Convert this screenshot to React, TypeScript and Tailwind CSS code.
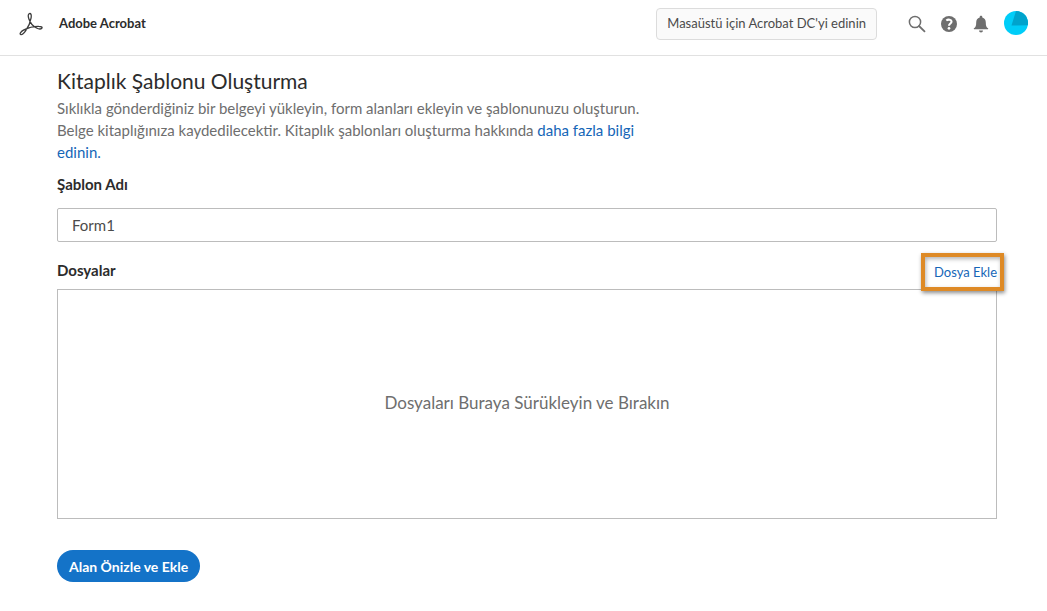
import React, { useState } from 'react'

function AcrobatLogo() {
  return (
    <svg viewBox="0 0 24 24" className="h-6 w-6" fill="none" stroke="#3c3c3c" aria-hidden="true">
      <path
        d="M10.400 1.600c1.700-.5 2.100 1.600 1.700 4.200-.6 4-2.900 9.300-5.500 13-1.700 2.400-3.800 4.100-5 3.600-1.300-.6.200-2.900 3.300-4.500 4.500-2.300 10.700-3.600 14.900-3.500 2.400 0 3.600.7 3.200 1.700-.5 1.300-3.200 1.100-5.500-.1-3.600-1.900-6.400-5.300-7.600-9-.8-2.400-.9-4.900.5-5.400z"
        strokeWidth="1.300"
      />
    </svg>
  )
}

function SearchIcon() {
  return (
    <svg viewBox="0 0 18 18" className="h-[18px] w-[18px]" fill="none" stroke="#6e6e6e" aria-hidden="true">
      <circle cx="7" cy="7" r="5.600" strokeWidth="1.500" />
      <path d="M11 11l5.500 5.300" strokeWidth="1.800" strokeLinecap="round" />
    </svg>
  )
}

function HelpIcon() {
  return (
    <svg viewBox="0 0 18 18" className="h-[18px] w-[18px]" aria-hidden="true">
      <circle cx="9" cy="9" r="8" fill="#6e6e6e" />
      <path d="M6.300 5.500c1.800-1.500 5.200-1.100 5.200 1.200 0 1.700-2.500 1.900-2.500 4" fill="none" stroke="#fff" strokeWidth="2.100" />
      <circle cx="9" cy="13.300" r="1.350" fill="#fff" />
    </svg>
  )
}

function BellIcon() {
  return (
    <svg viewBox="0 0 18 18" className="h-[18px] w-[18px]" fill="#6e6e6e" aria-hidden="true">
      <path d="M9 .8c.8 0 1.300.5 1.300 1.200v.6c2.300.6 3.500 2.500 3.500 5 0 3.500.6 4.700 2.200 5.700.4.300.3.900-.2.900H2.200c-.5 0-.6-.6-.2-.9 1.600-1 2.200-2.200 2.200-5.700 0-2.500 1.200-4.400 3.500-5V2c0-.7.500-1.200 1.300-1.200z" />
      <path d="M7 15.500h4a2 2 0 0 1-4 0z" />
    </svg>
  )
}

function Avatar() {
  return (
    <svg viewBox="0 0 24 24" className="h-6 w-6" aria-hidden="true">
      <circle cx="12" cy="12" r="12" fill="#00cdf8" />
      <path d="M12 0a12 12 0 0 1 11.800 14.200L7.500 14.500 12 0z" fill="#00a3cc" />
    </svg>
  )
}

export default function App() {
  const [name, setName] = useState('Form1')

  return (
    <div className="min-h-screen bg-white font-['Lato','Noto_Sans',sans-serif] text-[#2c2c2c]">
      <header className="flex h-14 items-center border-b border-[#e1e1e1] pb-[7px] pl-[19px] pr-[19px]">
        <AcrobatLogo />
        <span className="ml-4 text-[13px] font-bold">Adobe Acrobat</span>
        <button
          type="button"
          className="ml-auto h-8 whitespace-nowrap rounded border border-[#dcdcdc] bg-[#fafafa] px-[10px] text-[13px] text-[#4b4b4b]"
        >
          Masaüstü için Acrobat DC'yi edinin
        </button>
        <div className="ml-[31px] flex items-center gap-[14px]">
          <button type="button" aria-label="Ara"><SearchIcon /></button>
          <button type="button" aria-label="Yardım"><HelpIcon /></button>
          <button type="button" aria-label="Bildirimler"><BellIcon /></button>
          <button type="button" aria-label="Profil" className="-mt-[2px]"><Avatar /></button>
        </div>
      </header>

      <main className="pl-[57px] pr-[50px] pt-[11px]">
        <h1 className="text-[21px] leading-7">Kitaplık Şablonu Oluşturma</h1>
        <p className="mt-[2px] max-w-[600px] text-[15px] leading-[22px] text-[#6e6e6e]">
          Sıklıkla gönderdiğiniz bir belgeyi yükleyin, form alanları ekleyin ve şablonunuzu oluşturun.
          Belge kitaplığınıza kaydedilecektir. Kitaplık şablonları oluşturma hakkında{' '}
          <a href="#" className="text-[#1566b7]">daha fazla bilgi edinin.</a>
        </p>

        <label htmlFor="template-name" className="mt-[10px] block text-[15px] font-bold leading-[22px]">
          Şablon Adı
        </label>
        <input
          id="template-name"
          value={name}
          onChange={(e) => setName(e.target.value)}
          className="mt-[13px] block h-[34px] w-full rounded-xs border border-[#bcbcbc] px-[14px] text-[15px] text-[#4b4b4b] outline-none"
        />

        {/* Files header, with the add link marked */}
        <div className="mt-3 flex h-[35px] items-center justify-between">
          <h2 className="pb-[2px] text-[15px] font-bold">Dosyalar</h2>
          <div className="relative">
            <button type="button" className="block text-[13px] leading-5 text-[#1566b7]">Dosya Ekle</button>
            <span className="pointer-events-none absolute -bottom-[9px] -left-[13px] -right-[7px] -top-[9px] border-4 border-[#de8a26] shadow-[1px_2px_4px_rgba(0,0,0,0.45),inset_1px_2px_4px_rgba(0,0,0,0.3)]" />
          </div>
        </div>
        <div className="flex h-[230px] items-center justify-center border border-[#bcbcbc] pb-[2px] text-[17px] text-[#6e6e6e]">
          Dosyaları Buraya Sürükleyin ve Bırakın
        </div>

        <button
          type="button"
          className="mb-7 mt-[31px] h-8 rounded-full bg-[#1473c8] px-3 text-[14px] font-bold text-white"
        >
          Alan Önizle ve Ekle
        </button>
      </main>
    </div>
  )
}
